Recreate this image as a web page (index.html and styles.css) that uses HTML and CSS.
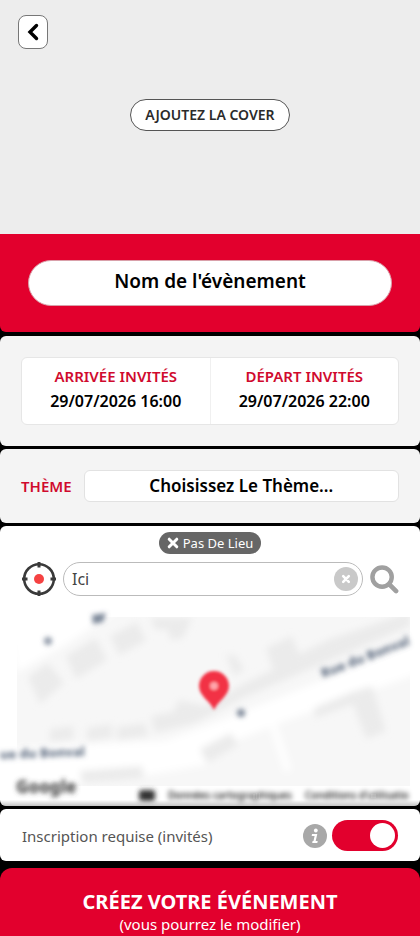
FILE: index.html
```html
<!DOCTYPE html>
<html lang="fr">
<head>
    <meta charset="UTF-8">
    <meta name="viewport" content="width=device-width, initial-scale=1.0">
    <title>Créer un évènement</title>
    <link rel="stylesheet" href="styles.css">
</head>
<body>
    <form class="page">
        <header class="cover">
            <button type="button" class="back" aria-label="Retour">
                <svg width="12" height="18" viewBox="0 0 12 18"><path d="M9.500 2.500L3 9l6.500 6.500" fill="none" stroke="#000" stroke-width="3.400" stroke-linecap="round"/></svg>
            </button>
            <button type="button" class="cover-button">AJOUTEZ LA COVER</button>
        </header>

        <section class="name-section">
            <input type="text" class="event-name" aria-label="Nom de l'évènement" value="Nom de l'évènement">
        </section>

        <section class="panel dates-section">
            <div class="dates">
                <button type="button" class="date">
                    <span class="red-label">ARRIVÉE INVITÉS</span>
                    <span class="date-value">29/07/2026 16:00</span>
                </button>
                <button type="button" class="date">
                    <span class="red-label">DÉPART INVITÉS</span>
                    <span class="date-value">29/07/2026 22:00</span>
                </button>
            </div>
        </section>

        <section class="panel theme-section">
            <label for="theme" class="red-label">THÈME</label>
            <select id="theme" class="theme-select">
                <option>Choisissez Le Thème...</option>
            </select>
        </section>

        <section class="panel place-section">
            <button type="button" class="no-place">
                <svg width="12" height="12" viewBox="0 0 12 12"><path d="M2.200 2.200l7.600 7.600M9.800 2.200l-7.600 7.600" stroke="#fff" stroke-width="3" stroke-linecap="round"/></svg>
                Pas De Lieu
            </button>
            <div class="search">
                <button type="button" class="icon-button" aria-label="Me localiser">
                    <svg width="34" height="34" viewBox="0 0 34 34">
                        <circle cx="17" cy="17" r="14.800" fill="none" stroke="#3a3a3a" stroke-width="2.600"/>
                        <path d="M17 0v5.500M17 28.500V34M0 17h5.500M28.500 17H34" stroke="#3a3a3a" stroke-width="3"/>
                        <circle cx="17" cy="17" r="5" fill="#f54242"/>
                    </svg>
                </button>
                <div class="search-box">
                    <input type="text" class="search-input" aria-label="Lieu" value="Ici">
                    <button type="button" class="icon-button" aria-label="Effacer">
                        <svg width="24" height="24" viewBox="0 0 24 24">
                            <circle cx="12" cy="12" r="12" fill="#c9c9c9"/>
                            <path d="M9.200 9.200l5.600 5.600M14.800 9.200l-5.600 5.600" stroke="#fff" stroke-width="2.600" stroke-linecap="round"/>
                        </svg>
                    </button>
                </div>
                <button type="button" class="icon-button" aria-label="Rechercher">
                    <svg width="29" height="29" viewBox="0 0 30 30" fill="none" stroke="#a0a0a0">
                        <circle cx="12.500" cy="12.500" r="10" stroke-width="4.600"/>
                        <path d="M20 20l7 7" stroke-width="4.800" stroke-linecap="round"/>
                    </svg>
                </button>
            </div>
            <svg class="map" viewBox="0 0 420 199" preserveAspectRatio="xMidYMid slice" role="img" aria-label="Carte">
                <defs>
                    <filter id="soft" x="-10%" y="-10%" width="120%" height="120%"><feGaussianBlur stdDeviation="3.500"/></filter>
                    <filter id="soft-text" x="-20%" y="-60%" width="140%" height="220%"><feGaussianBlur stdDeviation="2.400"/></filter>
                    <filter id="soft-pin" x="-40%" y="-40%" width="180%" height="180%"><feGaussianBlur stdDeviation="1.800"/></filter>
                    <linearGradient id="fade" x1="0" y1="0" x2="0" y2="1">
                        <stop offset="0" stop-color="#888" stop-opacity="0"/>
                        <stop offset="1" stop-color="#888" stop-opacity=".5"/>
                    </linearGradient>
                    <clipPath id="map-area"><rect x="17" y="10" width="393" height="169"/></clipPath>
                </defs>
                <g clip-path="url(#map-area)">
                    <rect x="17" y="10" width="393" height="169" fill="#f7f7f7"/>
                    <g filter="url(#soft)">
                        <path d="M5 0h118L65 38 17 65z" fill="#fff"/>
                        <path d="M0 142l75-4 90-4 60-22 195-78v32l-135 48-50 20-30 24-80 14-125 14z" fill="#fff"/>
                        <path d="M268 102l20 62" stroke="#fff" stroke-width="7"/>
                        <g fill="#ebebeb">
                            <path d="M28 70l20-14 16 20-24 21z"/>
                            <path d="M66 49l30-18 11 22-31 19z"/>
                            <path d="M110 29l27-14 9 19-27 14z"/>
                            <path d="M150 11h42l-9 20-12 2-4-11-11 1z"/>
                            <path d="M151 109l22-4 6-12 28 6 36-22 30-14-7-22 26-12 7 18 31-15 80-27v14L245 90l-50 26-40 10z"/>
                            <path d="M314 101l38-16 20-6 14 45-20 8-13-35-38 14z"/>
                            <path d="M50 122l23-3 1 13-24 3zM87 121l25-4v14l-25 3zM117 120l28-4 3 13-31 4z"/>
                            <path d="M80 164l62-5 2 12-62 5zM200 142l31-16 7 12-31 18z"/>
                            <path d="M226 47l10 2 8 14-10 6z"/>
                        </g>
                    </g>
                </g>
                <g filter="url(#soft-text)" class="map-road">
                    <circle cx="48" cy="34" r="4" opacity=".7"/>
                    <path d="M92 8l14-2-3 9-10 2z" opacity=".8"/>
                    <circle cx="241" cy="106" r="4" opacity=".8"/>
                    <text x="0" y="152" transform="rotate(-2 0 152)">ue du Bonval</text>
                    <text x="323" y="71" transform="rotate(-21 323 71)">Rue du Bonval</text>
                </g>
                <g filter="url(#soft-text)">
                    <text x="16" y="186" class="map-logo">Google</text>
                    <rect x="139" y="183" width="16" height="11" rx="3" fill="#333"/>
                    <text x="168" y="192" class="map-legal">Données cartographiques</text>
                    <text x="305" y="192" class="map-legal">Conditions d'utilisatio</text>
                </g>
                <g filter="url(#soft-pin)">
                    <path d="M214 103c-4-9-15-14-15-24a15 15 0 0 1 30 0c0 10-11 15-15 24z" fill="#f23345"/>
                    <circle cx="214" cy="79" r="4" fill="#ffa5aa"/>
                </g>
                <rect y="193" width="420" height="6" fill="url(#fade)"/>
            </svg>
        </section>

        <section class="panel signup-section">
            <label for="signup" class="signup-label">Inscription requise (invités)</label>
            <button type="button" class="icon-button" aria-label="Information">
                <svg width="24" height="24" viewBox="0 0 24 24">
                    <circle cx="12" cy="12" r="12" fill="#a8a8a8"/>
                    <circle cx="12.800" cy="6.500" r="1.900" fill="#fff"/>
                    <path d="M9 10h5.300l-1.600 7h2l-.4 1.900H9.200l.4-1.900h.9l1.100-5.100H8.700z" fill="#fff"/>
                </svg>
            </button>
            <input type="checkbox" id="signup" class="switch" checked>
        </section>

        <button type="submit" class="submit">
            <span class="submit-title">CRÉEZ VOTRE ÉVÉNEMENT</span>
            <span class="submit-note">(vous pourrez le modifier)</span>
        </button>
    </form>
</body>
</html>
```

FILE: styles.css
```css
* {
    box-sizing: border-box;
}
body {
    margin: 0;
    background-color: #000;
    font-family: 'Noto Sans', sans-serif;
    font-size: 16px;
    line-height: 24px;
    color: #000;
}
button, input, select {
    font: inherit;
    color: inherit;
    margin: 0;
}
button {
    cursor: pointer;
}
.page {
    display: flex;
    flex-direction: column;
}
.cover {
    display: flex;
    flex-direction: column;
    height: 234px;
    padding: 15px 18px;
    background-color: #ededed;
}
.back {
    display: flex;
    align-items: center;
    justify-content: center;
    width: 30px;
    height: 34px;
    padding: 0;
    background-color: #fff;
    border: 1px solid #777;
    border-radius: 8px;
}
.cover-button {
    align-self: center;
    height: 32px;
    margin-top: 50px;
    padding: 0 14px;
    background-color: #fff;
    border: 1px solid #555;
    border-radius: 16px;
    font-size: 14px;
    line-height: 20px;
    font-weight: 600;
    color: #2b2b2b;
}
.name-section {
    padding: 26px 28px;
    background-color: #e2002d;
    border-radius: 0 0 6px 6px;
}
.event-name {
    display: block;
    width: 100%;
    height: 46px;
    padding: 0 20px 4px;
    background-color: #fff;
    border: 1px solid #d9a0aa;
    border-radius: 23px;
    font-size: 19px;
    font-weight: 600;
    text-align: center;
}
.panel {
    margin-top: 3px;
    background-color: #f4f4f4;
    border-radius: 6px;
}
.dates-section {
    margin-top: 4px;
    padding: 21px 21px;
}
.dates {
    display: flex;
    background-color: #fff;
    border: 1px solid #e6e6e6;
    border-radius: 6px;
}
.date {
    flex: 1;
    display: flex;
    flex-direction: column;
    align-items: center;
    gap: 1px;
    padding: 6px 0 11px;
    background: none;
    border: none;
}
.date + .date {
    border-left: 1px solid #f0f0f0;
}
.red-label {
    font-size: 15px;
    font-weight: 600;
    color: #d00a2e;
}
.date-value {
    font-weight: 600;
}
.theme-section {
    display: flex;
    align-items: center;
    gap: 12px;
    padding: 21px 21px;
}
.theme-select {
    flex: 1;
    min-width: 0;
    height: 32px;
    padding: 0;
    background-color: #fff;
    border: 1px solid #e2e2e2;
    border-radius: 6px;
    appearance: none;
    font-size: 17px;
    font-weight: 600;
    text-align: center;
    text-align-last: center;
}
.place-section {
    display: flex;
    flex-direction: column;
    overflow: hidden;
    padding-top: 6px;
    background-color: #fff;
}
.no-place {
    display: flex;
    align-items: center;
    align-self: center;
    gap: 4px;
    height: 22px;
    padding: 0 8px;
    background-color: #666;
    border: none;
    border-radius: 11px;
    font-size: 13px;
    line-height: 20px;
    color: #fff;
}
.search {
    display: flex;
    align-items: center;
    gap: 7px;
    padding: 8px 21px 0 22px;
}
.icon-button {
    display: flex;
    flex-shrink: 0;
    padding: 0;
    background: none;
    border: none;
}
.search-box {
    flex: 1;
    display: flex;
    align-items: center;
    min-width: 0;
    height: 34px;
    padding: 0 4px 0 8px;
    border: 1px solid #bbb;
    border-radius: 17px;
}
.search-input {
    flex: 1;
    min-width: 0;
    padding: 0;
    background: none;
    border: none;
    color: #444;
}
.map {
    display: block;
    width: 100%;
    height: 199px;
    margin-top: 11px;
}
.map-road {
    font-size: 13px;
    font-weight: 800;
    fill: #5d6b80;
}
.map-logo {
    font-size: 17px;
    font-weight: 800;
    fill: #444;
}
.map-legal {
    font-size: 10px;
    font-weight: 500;
    fill: #111;
}
.signup-section {
    display: flex;
    align-items: center;
    gap: 5px;
    padding: 11px 22px 10px;
    background-color: #fff;
}
.signup-label {
    flex: 1;
    font-size: 15px;
    color: #555;
}
.switch {
    width: 66px;
    height: 31px;
    padding: 3px;
    background-color: #e2002d;
    border-radius: 16px;
    appearance: none;
    cursor: pointer;
}
.switch::before {
    content: '';
    display: block;
    width: 25px;
    height: 25px;
    background-color: #fff;
    border-radius: 50%;
}
.switch:checked::before {
    margin-left: auto;
}
.switch:not(:checked) {
    background-color: #aaa;
}
.submit {
    display: flex;
    flex-direction: column;
    align-items: center;
    margin-top: 7px;
    padding: 22px 20px 0;
    background-color: #e2002d;
    border: none;
    border-radius: 12px 12px 0 0;
    color: #fff;
}
.submit-title {
    font-size: 20px;
    line-height: 23px;
    font-weight: 700;
}
.submit-note {
    font-size: 15px;
    line-height: 23px;
}
```
